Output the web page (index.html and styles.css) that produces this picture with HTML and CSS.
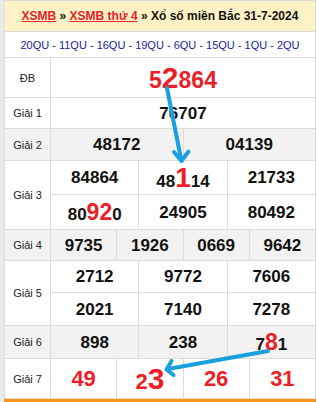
FILE: index.html
```html
<!DOCTYPE html>
<html lang="vi">
<head>
<meta charset="utf-8">
<title>XSMB thứ 4</title>
<link rel="stylesheet" href="styles.css">
</head>
<body>
<div class="page">
  <div class="board">
    <div class="title"><span><a href="#">XSMB</a> » <a href="#">XSMB thứ 4</a> » Xổ số miền Bắc 31-7-2024</span></div>
    <div class="codes">20QU - 11QU - 16QU - 19QU - 6QU - 15QU - 1QU - 2QU</div>

    <div class="lbl">ĐB</div>
    <div class="num full db"><span>5<span class="big">2</span>864</span></div>

    <div class="lbl">Giải 1</div>
    <div class="num full">76707</div>

    <div class="lbl alt">Giải 2</div>
    <div class="num half alt">48172</div>
    <div class="num half alt">04139</div>

    <div class="lbl tall">Giải 3</div>
    <div class="num third">84864</div>
    <div class="num third"><span>48<span class="big hl">1</span>14</span></div>
    <div class="num third">21733</div>
    <div class="num third"><span>80<span class="mid hl">92</span>0</span></div>
    <div class="num third">24905</div>
    <div class="num third">80492</div>

    <div class="lbl alt">Giải 4</div>
    <div class="num quarter alt">9735</div>
    <div class="num quarter alt">1926</div>
    <div class="num quarter alt">0669</div>
    <div class="num quarter alt">9642</div>

    <div class="lbl tall">Giải 5</div>
    <div class="num third">2712</div>
    <div class="num third">9772</div>
    <div class="num third">7606</div>
    <div class="num third">2021</div>
    <div class="num third">7140</div>
    <div class="num third">7278</div>

    <div class="lbl alt">Giải 6</div>
    <div class="num third alt">898</div>
    <div class="num third alt">238</div>
    <div class="num third alt"><span>7<span class="mid hl">8</span>1</span></div>

    <div class="lbl">Giải 7</div>
    <div class="num quarter red">49</div>
    <div class="num quarter red"><span>2<span class="big">3</span></span></div>
    <div class="num quarter red">26</div>
    <div class="num quarter red">31</div>
  </div>
  <div class="footer-bar"></div>
</div>
<svg class="arrows" width="317" height="402" viewBox="0 0 317 402">
  <g fill="none" stroke="#1a9fe0" stroke-width="4" stroke-linecap="round" stroke-linejoin="round">
    <line x1="167" y1="88" x2="181" y2="159"/>
    <polyline points="174,152 181.5,161 188.5,151.5"/>
    <line x1="268" y1="351" x2="168" y2="369"/>
    <polyline points="171.5,361 166.5,369.5 173.5,375"/>
  </g>
</svg>
</body>
</html>
```

FILE: styles.css
```css
html, body {
  margin: 0;
  padding: 0;
  background: #ffffff;
}

body {
  font-family: "Liberation Sans", Arial, sans-serif;
  position: relative;
  width: 317px;
  height: 402px;
  overflow: hidden;
}

.page {
  border-left: 4px solid #e8eaee;
  width: 312px;
}

.board {
  width: 312px;
  box-sizing: border-box;
  display: grid;
  grid-template-columns: 45px repeat(12, 1fr);
  grid-template-rows: 30px 25px 39px 30px 31px 33px 34px 30px 31px 32px 32px 39px;
  gap: 1px;
  background: #dedbd8;
  border: 1px solid #dedbd8;
}

.title {
  grid-column: 1 / -1;
  background: #fff3c6;
  font-size: 12px;
  font-weight: bold;
  color: #111;
  display: flex;
  align-items: center;
  justify-content: center;
  white-space: nowrap;
}

.title a {
  color: #e8212b;
  text-decoration: underline;
}

.codes {
  grid-column: 1 / -1;
  background: #fff;
  font-size: 11px;
  color: #1c1c96;
  display: flex;
  align-items: center;
  justify-content: center;
  white-space: nowrap;
}

.lbl {
  background: #fff;
  font-size: 11px;
  color: #222;
  display: flex;
  align-items: center;
  justify-content: center;
}

.lbl.tall {
  grid-row: span 2;
}

.num {
  background: #fff;
  font-size: 17px;
  font-weight: bold;
  color: #111;
  display: flex;
  align-items: center;
  justify-content: center;
  white-space: nowrap;
  line-height: 1;
}

.alt {
  background: #f2f2f2;
}

.full { grid-column: span 12; }
.half { grid-column: span 6; }
.third { grid-column: span 4; }
.quarter { grid-column: span 3; }

.db {
  font-size: 23px;
  color: #ec1f28;
}

.red {
  font-size: 22px;
  color: #ec1f28;
}

.big {
  font-size: 30px;
}

.mid {
  font-size: 23px;
}

.hl {
  color: #ec1f28;
}

.num .big.hl {
  font-size: 28px;
}

.footer-bar {
  height: 3px;
  width: 312px;
  background: #f7941d;
}

.arrows {
  position: absolute;
  left: 0;
  top: 0;
  pointer-events: none;
}
```
